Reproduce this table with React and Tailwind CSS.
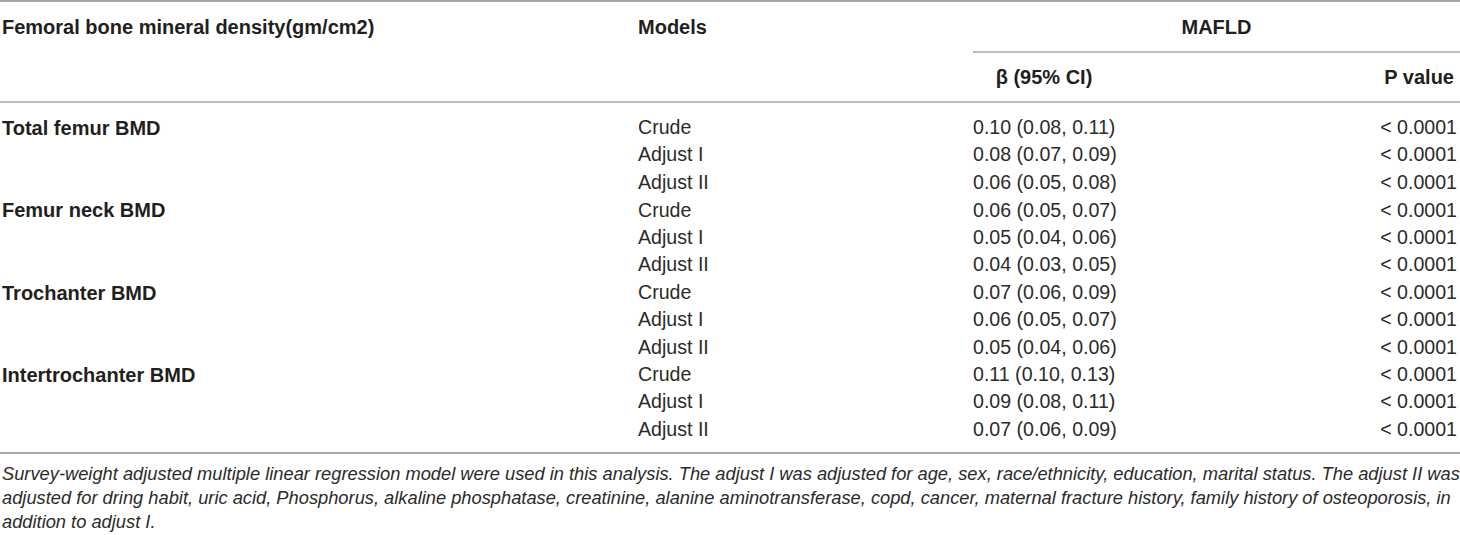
import React from 'react';

const groups = [
  {
    name: 'Total femur BMD',
    rows: [
      ['Crude', '0.10 (0.08, 0.11)'],
      ['Adjust I', '0.08 (0.07, 0.09)'],
      ['Adjust II', '0.06 (0.05, 0.08)'],
    ],
  },
  {
    name: 'Femur neck BMD',
    rows: [
      ['Crude', '0.06 (0.05, 0.07)'],
      ['Adjust I', '0.05 (0.04, 0.06)'],
      ['Adjust II', '0.04 (0.03, 0.05)'],
    ],
  },
  {
    name: 'Trochanter BMD',
    rows: [
      ['Crude', '0.07 (0.06, 0.09)'],
      ['Adjust I', '0.06 (0.05, 0.07)'],
      ['Adjust II', '0.05 (0.04, 0.06)'],
    ],
  },
  {
    name: 'Intertrochanter BMD',
    rows: [
      ['Crude', '0.11 (0.10, 0.13)'],
      ['Adjust I', '0.09 (0.08, 0.11)'],
      ['Adjust II', '0.07 (0.06, 0.09)'],
    ],
  },
];

const cols = 'grid grid-cols-[638px_335px_142px_1fr]';

const App = () => {
  return (
    <div className="w-[1460px] h-[535px] bg-white text-[#231f20] font-['Liberation_Sans',Arial,sans-serif] overflow-hidden">
      {/* Header */}
      <div className="border-t-2 border-[#a7a7a7]">
        <div className={`${cols} h-[49px] items-center font-bold text-[20px]`}>
          <div className="pl-[2px] whitespace-nowrap">Femoral bone mineral density(gm/cm2)</div>
          <div>Models</div>
          <div className="col-span-2 text-center">MAFLD</div>
        </div>
        <div className={`${cols} h-[50px] items-center font-bold text-[20px]`}>
          <div />
          <div />
          <div className="col-span-2 grid grid-cols-[142px_1fr] h-full items-center border-t-2 border-[#bdbdbd]">
            <div className="text-center whitespace-nowrap">β (95% CI)</div>
            <div className="text-right pr-[6px]">P value</div>
          </div>
        </div>
      </div>

      {/* Body */}
      <div className="border-t-2 border-[#bdbdbd] pt-[10px] pb-[10px] text-[19.6px] text-[#2b2b2b]">
        {groups.map((g) =>
          g.rows.map(([model, beta], i) => (
            <div key={g.name + model} className={`${cols} h-[27.45px] items-center`}>
              <div className="pl-[2px] font-bold text-[20px] text-[#231f20]">{i === 0 ? g.name : ''}</div>
              <div>{model}</div>
              <div className="text-center whitespace-nowrap">{beta}</div>
              <div className="text-right pr-[3px]">&lt; 0.0001</div>
            </div>
          ))
        )}
      </div>

      {/* Footnote */}
      <div className="border-t-2 border-[#a7a7a7] pt-[8px] text-[18.3px] leading-[24px] italic pl-[2px] text-[#2b2b2b]">
        Survey-weight adjusted multiple linear regression model were used in this analysis. The adjust I was adjusted for age, sex, race/ethnicity, education, marital status. The adjust II was adjusted for dring habit, uric acid, Phosphorus, alkaline phosphatase, creatinine, alanine aminotransferase, copd, cancer, maternal fracture history, family history of osteoporosis, in addition to adjust I.
      </div>
    </div>
  );
};

export default App;
